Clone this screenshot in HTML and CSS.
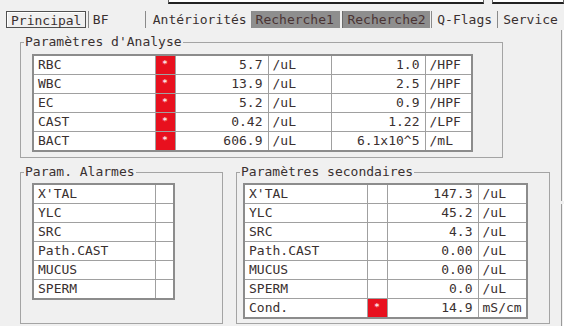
FILE: index.html
```html
<!DOCTYPE html>
<html lang="fr">
<head>
  <meta charset="UTF-8">
  <title>Principal</title>
  <link rel="stylesheet" href="styles.css">
</head>
<body>
  <div class="topbar">
    <div class="topbox topbox-main"></div>
    <div class="topbox topbox-side"></div>
  </div>

  <div class="tabs">
    <span class="tab tab-principal active">Principal</span>
    <span class="tab tab-bf">BF</span>
    <span class="tab tab-ant">Antériorités</span>
    <span class="tab tab-rech grey">Recherche1</span>
    <span class="tab tab-rech tab-rech2 grey">Recherche2</span>
    <span class="tab tab-qflags">Q-Flags</span>
    <span class="tab tab-service">Service</span>
  </div>

  <div class="page">
    <div class="content">
      <fieldset class="group group-analyse">
        <legend>Paramètres d'Analyse</legend>
        <table class="grid grid-analyse">
          <colgroup>
            <col class="c-name"><col class="c-flag"><col class="c-val"><col class="c-unit"><col class="c-val2"><col class="c-unit2">
          </colgroup>
          <tr><td>RBC</td><td class="flag">*</td><td class="num">5.7</td><td>/uL</td><td class="num">1.0</td><td>/HPF</td></tr>
          <tr><td>WBC</td><td class="flag">*</td><td class="num">13.9</td><td>/uL</td><td class="num">2.5</td><td>/HPF</td></tr>
          <tr><td>EC</td><td class="flag">*</td><td class="num">5.2</td><td>/uL</td><td class="num">0.9</td><td>/HPF</td></tr>
          <tr><td>CAST</td><td class="flag">*</td><td class="num">0.42</td><td>/uL</td><td class="num">1.22</td><td>/LPF</td></tr>
          <tr><td>BACT</td><td class="flag">*</td><td class="num">606.9</td><td>/uL</td><td class="num">6.1x10^5</td><td>/mL</td></tr>
        </table>
      </fieldset>

      <div class="row">
        <fieldset class="group group-alarms">
          <legend>Param. Alarmes</legend>
          <table class="grid grid-alarms">
            <colgroup><col class="c-name"><col class="c-flag"></colgroup>
            <tr><td>X'TAL</td><td></td></tr>
            <tr><td>YLC</td><td></td></tr>
            <tr><td>SRC</td><td></td></tr>
            <tr><td>Path.CAST</td><td></td></tr>
            <tr><td>MUCUS</td><td></td></tr>
            <tr><td>SPERM</td><td></td></tr>
          </table>
        </fieldset>

        <fieldset class="group group-second">
          <legend>Paramètres secondaires</legend>
          <table class="grid grid-second">
            <colgroup><col class="c-name2"><col class="c-flag"><col class="c-val3"><col class="c-unit3"></colgroup>
            <tr><td>X'TAL</td><td></td><td class="num">147.3</td><td>/uL</td></tr>
            <tr><td>YLC</td><td></td><td class="num">45.2</td><td>/uL</td></tr>
            <tr><td>SRC</td><td></td><td class="num">4.3</td><td>/uL</td></tr>
            <tr><td>Path.CAST</td><td></td><td class="num">0.00</td><td>/uL</td></tr>
            <tr><td>MUCUS</td><td></td><td class="num">0.00</td><td>/uL</td></tr>
            <tr><td>SPERM</td><td></td><td class="num">0.0</td><td>/uL</td></tr>
            <tr><td>Cond.</td><td class="flag">*</td><td class="num">14.9</td><td>mS/cm</td></tr>
          </table>
        </fieldset>
      </div>
    </div>

    <div class="edge">
      <div class="edge-line edge-top"></div>
      <div class="edge-line edge-bottom"></div>
    </div>
  </div>
</body>
</html>
```

FILE: styles.css
```css
html, body {
  overflow: hidden;
}

body {
  margin: 0;
  background: #f0f0f0;
  color: #3a3030;
  font-family: "DejaVu Sans Mono", "Liberation Mono", monospace;
  font-size: 13px;
  height: 326px;
}

/* strip of boxes cut off at the top */
.topbar {
  display: flex;
  height: 4px;
  padding-left: 168px;
}

.topbox {
  box-sizing: border-box;
  height: 4px;
  border-left: 1px solid #666;
  border-right: 1px solid #666;
  border-bottom: 2px solid #222;
  background: #fff;
}

.topbox-main {
  width: 318px;
}

.topbox-side {
  width: 72px;
  margin-left: 8px;
}

/* tabs */
.tabs {
  display: flex;
  margin-top: 7px;
  height: 17px;
}

.tab {
  box-sizing: border-box;
  height: 17px;
  line-height: 17px;
  border-left: 1px solid #8a8a8a;
  white-space: nowrap;
}

.tab.active {
  margin-left: 6px;
  width: 80px;
  padding-left: 4px;
  border: 1px solid #505050;
  box-shadow: inset 1px 1px 0 #fff;
}

.tab-bf {
  margin-left: 2px;
  width: 57px;
  padding-left: 4px;
}

.tab-ant {
  width: 106px;
  padding-left: 7px;
}

.tab-rech {
  width: 90px;
  padding-left: 4px;
}

.tab-rech2 {
  margin-left: 2px;
  width: 88px;
  border-left-color: #6a6a6a;
}

.tab.grey {
  background: #8e8e8e;
  color: #4a3434;
}

.tab-qflags {
  margin-left: 1px;
  width: 66px;
  padding-left: 5px;
}

.tab-service {
  width: 67px;
  padding-left: 5px;
}

/* page */
.page {
  display: flex;
}

.content {
  width: 561px;
  padding-top: 7px;
}

.edge {
  display: flex;
  flex-direction: column;
  gap: 3px;
  padding-top: 2px;
}

.edge-line {
  width: 1px;
  border-left: 1px solid #9a9a9a;
  border-right: 1px solid #fff;
}

.edge-top {
  height: 171px;
}

.edge-bottom {
  height: 130px;
}

/* group boxes */
.group {
  box-sizing: border-box;
  margin: 0;
  min-inline-size: 0;
  border: 1px solid #a4a4a4;
  padding: 5px 6px 5px 3px;
}

.group legend {
  padding: 0 1px;
  line-height: 14px;
}

.group-analyse {
  margin-left: 20px;
  width: 483px;
}

.row {
  display: flex;
  gap: 13px;
  margin-top: 7px;
  margin-left: 20px;
}

.group-alarms {
  width: 203px;
  padding-top: 4px;
  padding-bottom: 3px;
}

.group-second {
  width: 314px;
  padding-top: 4px;
  padding-bottom: 4px;
}

/* tables */
.grid {
  border-collapse: collapse;
  table-layout: fixed;
  background: #fff;
  border: 2px solid #8c8c8c;
  margin-left: 8px;
}

.grid td {
  border: 1px solid #a0a0a0;
  height: 18px;
  line-height: 18px;
  padding: 0 4px;
  white-space: nowrap;
  overflow: hidden;
}

.grid td.num {
  text-align: right;
  padding-right: 5px;
}

.grid td.flag {
  background: #e8101e;
  color: #fde6e8;
  font-size: 9px;
  font-weight: bold;
  line-height: 16px;
  text-align: center;
  vertical-align: top;
  padding: 0;
}

.grid-analyse {
  width: 439px;
}

.grid-alarms {
  width: 141px;
}

.grid-second {
  width: 283px;
  margin-left: 3px;
}

.c-name { width: 122px; }
.c-flag { width: 20px; }
.c-val { width: 93px; }
.c-unit { width: 63px; }
.c-val2 { width: 94px; }
.c-unit2 { width: 47px; }
.c-name2 { width: 123px; }
.c-val3 { width: 91px; }
.c-unit3 { width: 49px; }

.grid-alarms .c-flag { width: 19px; }
```
